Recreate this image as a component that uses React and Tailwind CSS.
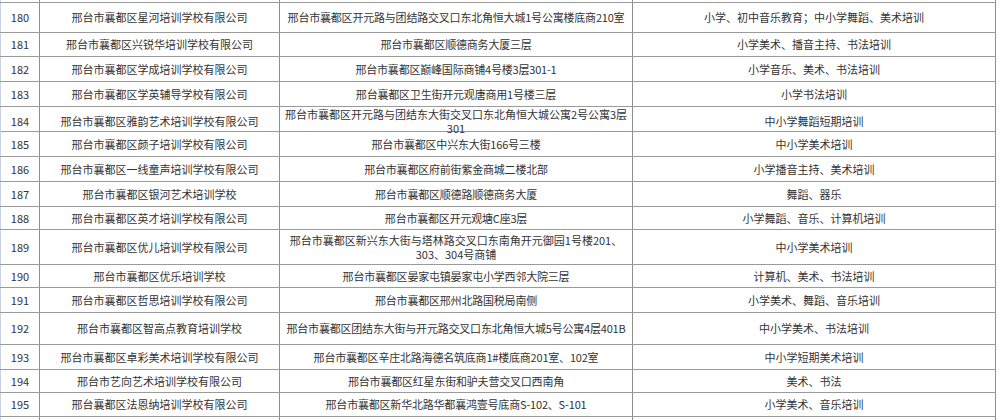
const rows = [
  { no: 180, h: 30, name: "邢台市襄都区星河培训学校有限公司", addr: "邢台市襄都区开元路与团结路交叉口东北角恒大城1号公寓楼底商210室", biz: "小学、初中音乐教育；中小学舞蹈、美术培训" },
  { no: 181, h: 24, name: "邢台市襄都区兴锐华培训学校有限公司", addr: "邢台市襄都区顺德商务大厦三层", biz: "小学美术、播音主持、书法培训" },
  { no: 182, h: 25, name: "邢台市襄都区学成培训学校有限公司", addr: "邢台市襄都区巅峰国际商铺4号楼3层301-1", biz: "小学音乐、美术、书法培训" },
  { no: 183, h: 25, name: "邢台市襄都区学英辅导学校有限公司", addr: "邢台襄都区卫生街开元观唐商用1号楼三层", biz: "小学书法培训" },
  { no: 184, h: 25, name: "邢台市襄都区雅韵艺术培训学校有限公司", addr: ["邢台市襄都区开元路与团结东大街交叉口东北角恒大城公寓2号公寓3层", "301"], biz: "中小学舞蹈短期培训" },
  { no: 185, h: 25, name: "邢台市襄都区颜子培训学校有限公司", addr: "邢台市襄都区中兴东大街166号三楼", biz: "中小学美术培训" },
  { no: 186, h: 25, name: "邢台市襄都区一线童声培训学校有限公司", addr: "邢台市襄都区府前街紫金商城二楼北部", biz: "小学播音主持、美术培训" },
  { no: 187, h: 25, name: "邢台市襄都区银河艺术培训学校", addr: "邢台市襄都区顺德路顺德商务大厦", biz: "舞蹈、器乐" },
  { no: 188, h: 23, name: "邢台市襄都区英才培训学校有限公司", addr: "邢台市襄都区开元观塘C座3层", biz: "小学舞蹈、音乐、计算机培训" },
  { no: 189, h: 35, name: "邢台市襄都区优儿培训学校有限公司", addr: ["邢台市襄都区新兴东大街与塔林路交叉口东南角开元御园1号楼201、", "303、304号商铺"], biz: "中小学美术培训" },
  { no: 190, h: 23, name: "邢台市襄都区优乐培训学校", addr: "邢台市襄都区晏家屯镇晏家屯小学西邻大院三层", biz: "计算机、美术、书法培训" },
  { no: 191, h: 25, name: "邢台市襄都区哲思培训学校有限公司", addr: "邢台市襄都区邢州北路国税局南侧", biz: "小学美术、舞蹈、音乐培训" },
  { no: 192, h: 32, name: "邢台市襄都区智高点教育培训学校", addr: "邢台市襄都区团结东大街与开元路交叉口东北角恒大城5号公寓4层401B", biz: "中小学美术、书法培训" },
  { no: 193, h: 25, name: "邢台市襄都区卓彩美术培训学校有限公司", addr: "邢台市襄都区辛庄北路海德名筑底商1#楼底商201室、102室", biz: "中小学短期美术培训" },
  { no: 194, h: 23, name: "邢台市艺向艺术培训学校有限公司", addr: "邢台市襄都区红星东街和驴夫营交叉口西南角", biz: "美术、书法" },
  { no: 195, h: 24, name: "邢台襄都区法恩纳培训学校有限公司", addr: "邢台市襄都区新华北路华都襄鸿壹号底商S-102、S-101", biz: "小学美术、音乐培训" },
];

const font = { fontFamily: '"Noto Sans CJK SC", "Liberation Sans", sans-serif' };

function Cell({ children, className = "" }) {
  return (
    <div className={`flex items-center justify-center border-r border-[#8f8f8f] text-center whitespace-nowrap ${className}`}>
      {children}
    </div>
  );
}

export default function App() {
  return (
    <div className="w-[1000px] h-[420px] overflow-hidden bg-white text-[11px] text-[#333]" style={font}>
      <div className="w-[996px]">
        {/* sliver of the previous row */}
        <div className="grid grid-cols-[40px_240px_353px_363px] h-[3px] border-b border-[#9a9a9a]">
          <div className="border-r border-[#8f8f8f] border-l border-l-[#c9d3e0]" />
          <div className="border-r border-[#8f8f8f]" />
          <div className="border-r border-[#8f8f8f]" />
          <div className="border-r border-[#8f8f8f]" />
        </div>
        {rows.map((r) => (
          <div
            key={r.no}
            className="grid grid-cols-[40px_240px_353px_363px] border-b border-[#9a9a9a]"
            style={{ height: r.h }}
          >
            <Cell className="border-l border-l-[#c9d3e0]">{r.no}</Cell>
            <Cell>{r.name}</Cell>
            <Cell className="overflow-visible">
              {Array.isArray(r.addr) ? (
                <div className="flex flex-col items-center leading-[14px]">
                  <span>{r.addr[0]}</span>
                  <span>{r.addr[1]}</span>
                </div>
              ) : (
                <span className="tracking-[-0.2px]">{r.addr}</span>
              )}
            </Cell>
            <Cell>{r.biz}</Cell>
          </div>
        ))}
        <div className="grid grid-cols-[40px_240px_353px_363px] h-[4px]">
          <div className="border-r border-[#8f8f8f] border-l border-l-[#c9d3e0]" />
          <div className="border-r border-[#8f8f8f]" />
          <div className="border-r border-[#8f8f8f]" />
          <div className="border-r border-[#8f8f8f]" />
        </div>
      </div>
    </div>
  );
}
